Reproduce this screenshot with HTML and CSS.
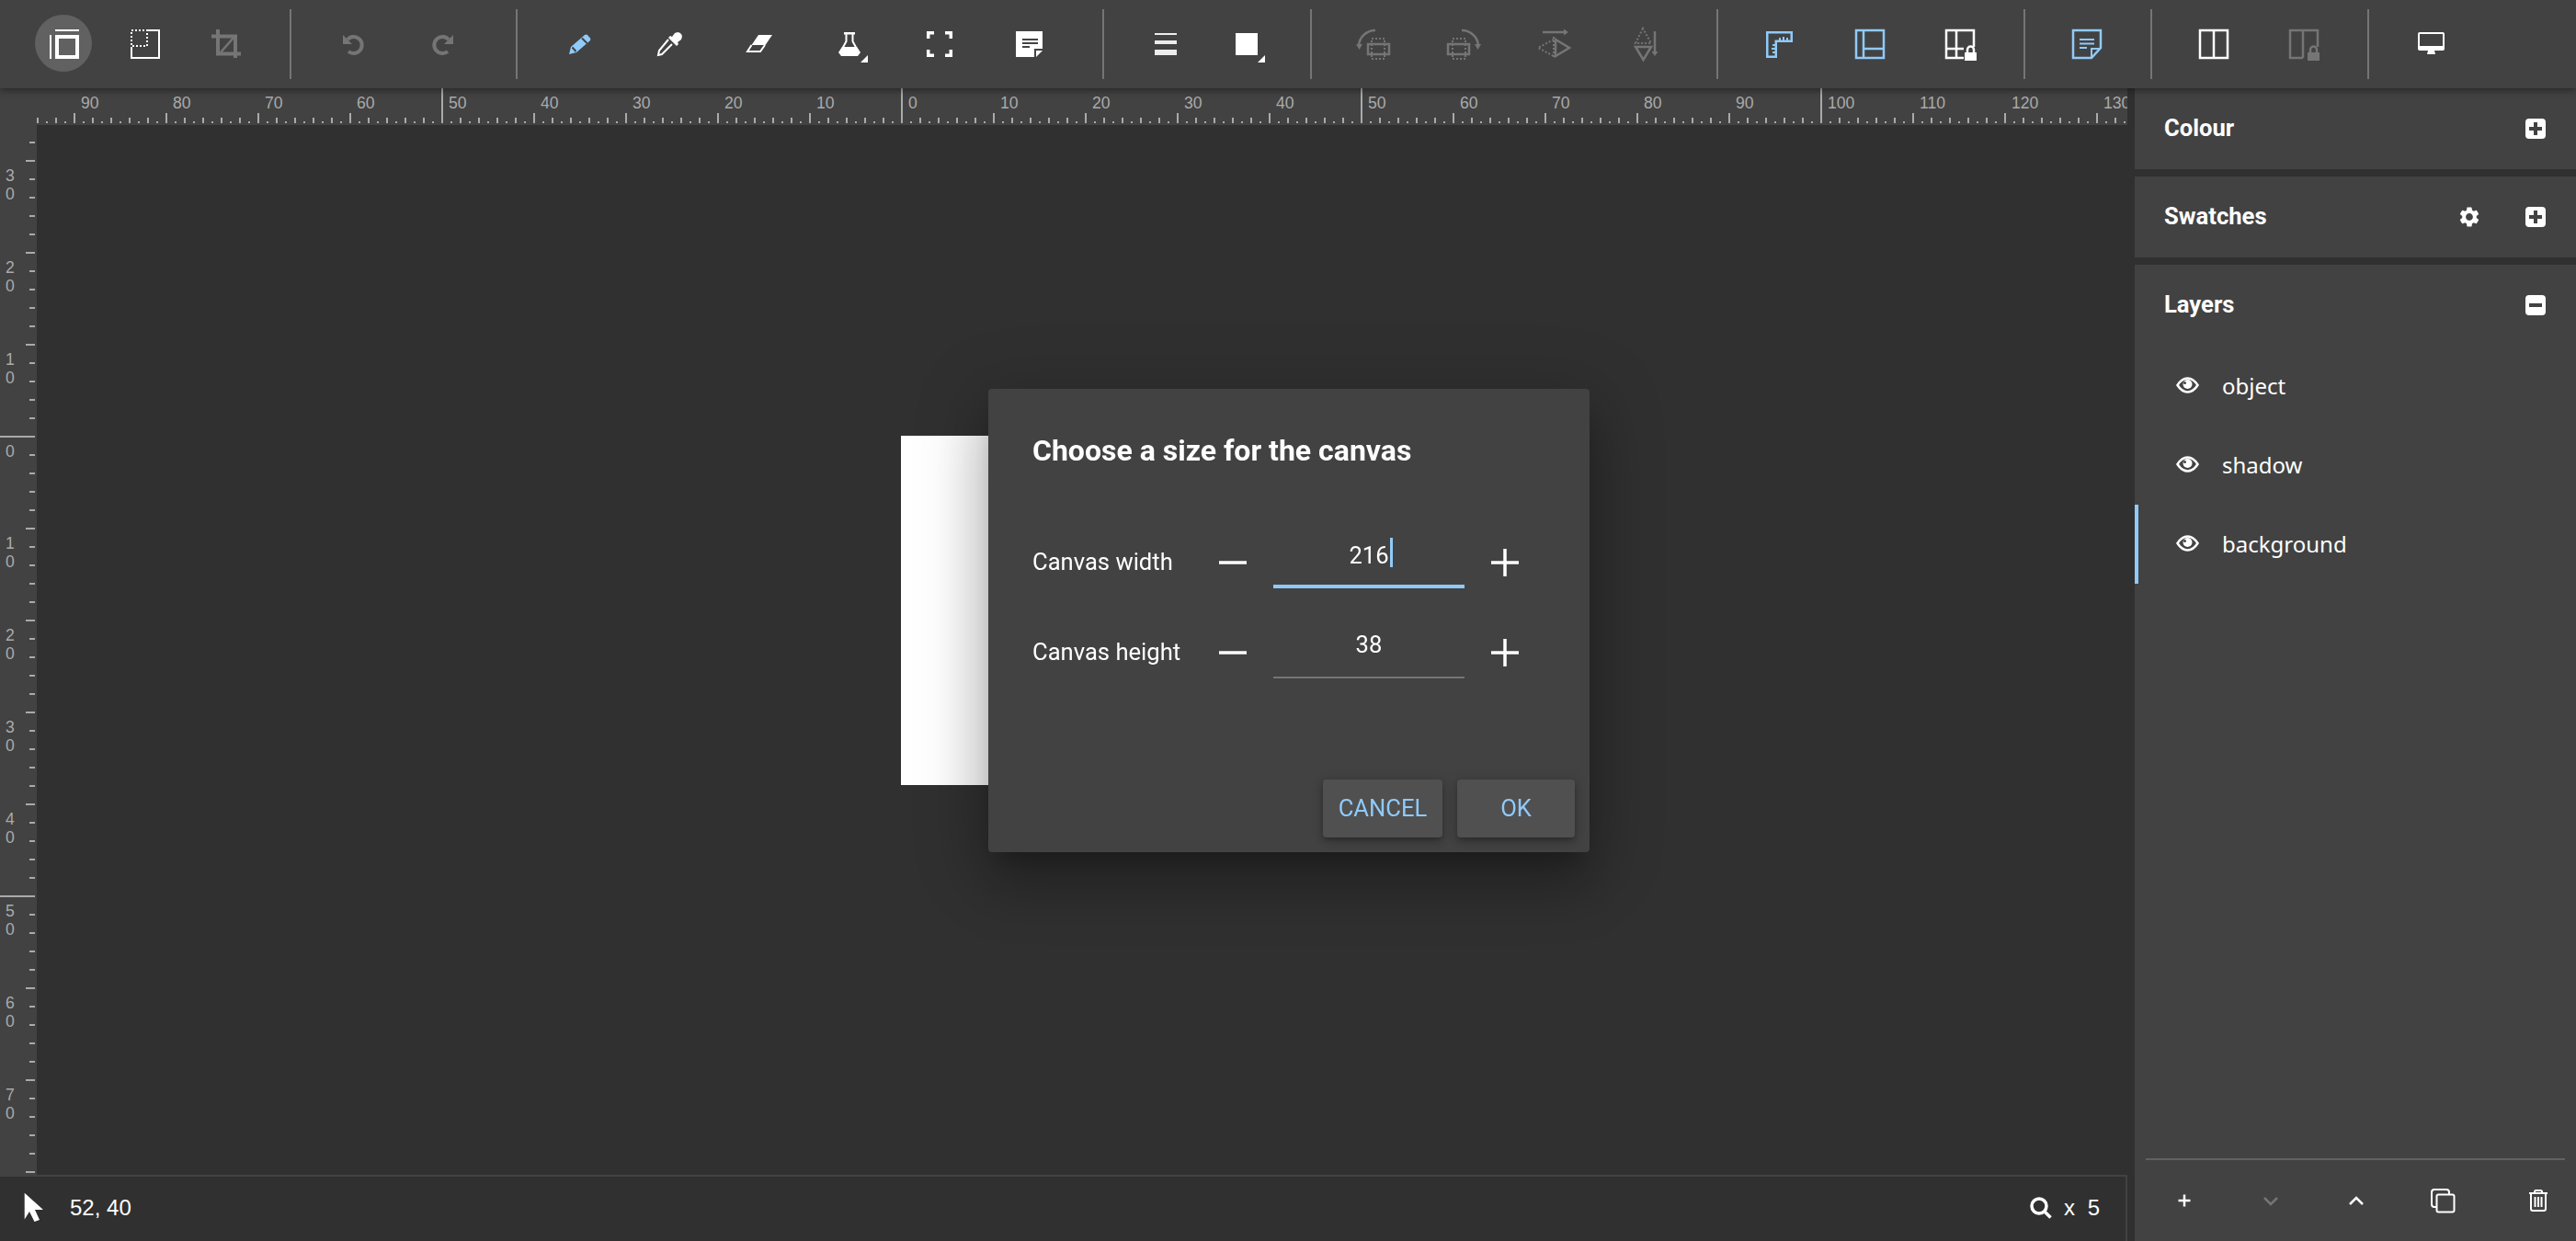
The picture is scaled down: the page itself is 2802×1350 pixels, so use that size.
FILE: index.html
```html
<!DOCTYPE html>
<html lang="en">
<head>
  <meta charset="UTF-8">
  <title>Pixel editor</title>
  <link rel="stylesheet" href="styles.css">
</head>
<body>
  <div class="app">
    <header class="toolbar">
      <div class="tool-group group-first">
        <button class="tool tool-sm tool-active"><svg viewBox="0 0 40 40"><path class="ln-white ln-fine" d="M6 10V36M11 5H37"/><rect class="ln-white ln-thick" x="13" y="12" width="22" height="22"/></svg></button>
        <button class="tool tool-sm"><svg viewBox="0 0 40 40"><path class="ln-white ln-fine" d="M24 5H36V35H6V23"/><rect class="ln-white dotted" x="6" y="5" width="17" height="17"/></svg></button>
        <button class="tool tool-sm"><svg viewBox="0 0 40 40"><path class="ln-grey ln-thick" d="M12 4V30.500H37M5 11.500H31V35"/><path class="ln-grey" d="M15 29L29 13"/></svg></button>
      </div>
      <span class="tool-sep"></span>
      <div class="tool-group group-wide">
        <button class="tool"><svg viewBox="0 0 40 40"><path class="ln-grey ln-thick" d="M14 15A9 9 0 1 1 15 28"/><path class="fill-grey" d="M9 10V20H19z"/></svg></button>
        <button class="tool"><svg viewBox="0 0 40 40"><g transform="matrix(-1 0 0 1 40 0)"><path class="ln-grey ln-thick" d="M14 15A9 9 0 1 1 15 28"/><path class="fill-grey" d="M9 10V20H19z"/></g></svg></button>
      </div>
      <span class="tool-sep"></span>
      <div class="tool-group group-wide">
        <button class="tool"><svg viewBox="0 0 40 40"><path class="fill-blue" d="M9 31L11 23L26 10Q27.500 9 29 10L32 13.500Q33 15 31.500 16.500L17 29z"/><path class="ln-bg" d="M12.500 23.500L16.500 28M23 13.500L28.500 19"/></svg></button>
        <button class="tool"><svg viewBox="0 0 40 40"><path class="fill-white" d="M29 7A5 5 0 0 1 33 15L29 18L30 20L28 22L19 13L21 11L23 12L26 8z"/><path class="ln-white ln-fine" d="M19 15L9 27L8 32L12 31L23 20"/></svg></button>
        <button class="tool"><svg viewBox="0 0 40 40"><path class="fill-white" d="M19 10H34L26.500 21H11.500z"/><path class="ln-white ln-fine" d="M11.500 21L7 28H21L26 21"/></svg></button>
        <button class="tool"><svg viewBox="0 0 40 40"><path class="fill-white" d="M14 7H26V9.500H14zM12 23H28L32 29L29 33H11L8 29z"/><path class="ln-white ln-fine" d="M16.500 9V17L11 27M23.500 9V17L29 27"/><path class="fill-white" d="M32 40L40 32V40z"/></svg></button>
        <button class="tool"><svg viewBox="0 0 40 40"><path class="ln-white ln-mid" d="M7.700 14V7.700H14M26 7.700H32.300V14M32.300 26V32.300H26M14 32.300H7.700V26"/></svg></button>
        <button class="tool"><svg viewBox="0 0 40 40"><path class="fill-white" d="M5 6H34V25H25V34H5z"/><path class="fill-white" d="M27 34V27H34z"/><path class="ln-bg" d="M12 15H29M12 19H29M12 23H20"/></svg></button>
      </div>
      <span class="tool-sep"></span>
      <div class="tool-group group-stroke">
        <button class="tool tool-sm"><svg viewBox="0 0 40 40"><path class="fill-soft" d="M8 8H32V10H8zM8 16H32V20H8zM8 26H32V32H8z"/></svg></button>
        <button class="tool tool-sm"><svg viewBox="0 0 40 40"><path class="fill-white" d="M8 8H32V32H8zM32 40L40 32V40z"/></svg></button>
      </div>
      <span class="tool-sep"></span>
      <div class="tool-group group-wide">
        <button class="tool"><svg viewBox="0 0 40 40"><rect class="ln-grey" x="14" y="20" width="23" height="11"/><rect class="ln-grey dotted" x="18" y="14" width="14" height="22"/><path class="ln-grey" d="M22 5A18 18 0 0 0 4 21"/><path class="fill-grey" d="M1 20H8L4.500 26z"/></svg></button>
        <button class="tool"><svg viewBox="0 0 40 40"><g transform="matrix(-1 0 0 1 40 0)"><rect class="ln-grey" x="14" y="20" width="23" height="11"/><rect class="ln-grey dotted" x="18" y="14" width="14" height="22"/><path class="ln-grey" d="M22 5A18 18 0 0 0 4 21"/><path class="fill-grey" d="M1 20H8L4.500 26z"/></g></svg></button>
        <button class="tool"><svg viewBox="0 0 40 40"><path class="ln-grey" d="M8 7H32M22 15V33L37 24z"/><path class="fill-grey" d="M31 3.500L36 7L31 10.500z"/><path class="ln-grey dotted" d="M20 12V35M20 15L3 24L20 33"/></svg></button>
        <button class="tool"><svg viewBox="0 0 40 40"><path class="ln-grey" d="M32 6V30M11 23H28L19.500 37z"/><path class="fill-grey" d="M28.500 28H35.500L32 33z"/><path class="ln-grey dotted" d="M19 3L11 19H28z"/></svg></button>
      </div>
      <span class="tool-sep"></span>
      <div class="tool-group group-slim">
        <button class="tool"><svg viewBox="0 0 40 40"><path class="ln-blue" d="M6.250 7.250H32.750V16.750H15.750V33.750H6.250z"/><path class="ln-blue ln-fine" d="M20 17V13M24 17V12M28 17V13M16 21H12M16 25H11M16 29H12"/></svg></button>
        <button class="tool"><svg viewBox="0 0 40 40"><rect class="ln-blue" x="5" y="5" width="30" height="30"/><path class="ln-blue" d="M13 5V35M13 25H35"/></svg></button>
        <button class="tool"><svg viewBox="0 0 40 40"><path class="ln-white" d="M35 23V5H5V35H24M16 5V35M5 25H24"/><path class="fill-white" d="M25 29H38V38H25z"/><path class="ln-white" d="M28 29V26A3.500 3.500 0 0 1 35 26V29"/></svg></button>
      </div>
      <span class="tool-sep"></span>
      <div class="tool-group group-slim">
        <button class="tool"><svg viewBox="0 0 40 40"><path class="ln-blue" d="M5 5H35V24L25 35H5z"/><path class="ln-blue ln-fine" d="M25 35V25H35M12 15H28M12 19.500H28M12 24H20"/></svg></button>
      </div>
      <span class="tool-sep"></span>
      <div class="tool-group group-slim">
        <button class="tool"><svg viewBox="0 0 40 40"><rect class="ln-white" x="5" y="5" width="30" height="30"/><path class="ln-white" d="M20 5V35"/></svg></button>
        <button class="tool"><svg viewBox="0 0 40 40"><path class="ln-grey" d="M35 23V5H5V35H19M19 5V35"/><path class="fill-grey" d="M24 29H37V38H24z"/><path class="ln-grey" d="M27 29V26A3.500 3.500 0 0 1 34 26V29"/></svg></button>
      </div>
      <span class="tool-sep"></span>
      <div class="tool-group">
        <button class="tool"><svg viewBox="0 0 40 40"><path class="fill-white" fill-rule="evenodd" d="M8 7H33Q35 7 35 9V25Q35 27 33 27H24L25 31H16L17 27H8Q6 27 6 25V9Q6 7 8 7zM8 9V22H33V9z"/></svg></button>
      </div>
    </header>

    <div class="workspace">
      <main class="editor">
        <div class="ruler-top">
          <div class="ruler-top-track">
            <span class="h-label">90</span><span class="h-label">80</span><span class="h-label">70</span><span class="h-label">60</span><span class="h-label">50</span><span class="h-label">40</span><span class="h-label">30</span><span class="h-label">20</span><span class="h-label">10</span><span class="h-label">0</span><span class="h-label">10</span><span class="h-label">20</span><span class="h-label">30</span><span class="h-label">40</span><span class="h-label">50</span><span class="h-label">60</span><span class="h-label">70</span><span class="h-label">80</span><span class="h-label">90</span><span class="h-label">100</span><span class="h-label">110</span><span class="h-label">120</span><span class="h-label">130</span>
          </div>
        </div>
        <div class="stage">
          <div class="ruler-left">
            <div class="v-label">30</div><div class="v-label">20</div><div class="v-label">10</div><div class="v-label">0</div><div class="v-label">10</div><div class="v-label">20</div><div class="v-label">30</div><div class="v-label">40</div><div class="v-label">50</div><div class="v-label">60</div><div class="v-label">70</div>
          </div>
          <div class="canvas-area">
            <div class="paper"></div>
          </div>
        </div>
        <footer class="status">
          <div class="status-item">
            <svg class="cursor-icon" viewBox="0 0 22 33"><path class="fill-white" d="M.7.7V29.500L6 21L11.500 32L17 30L12 19H21z"/></svg>
            <span>52, 40</span>
          </div>
          <div class="status-item zoom-item">
            <svg class="search-icon" viewBox="0 0 24 24"><circle class="ln-white ln-mid" cx="10" cy="10" r="8"/><path class="ln-white ln-mid" d="M15.500 15.500L22.500 22.500"/></svg>
            <span>x 5</span>
          </div>
        </footer>
      </main>

      <aside class="panel">
        <section class="panel-section">
          <div class="panel-head">
            <h2>Colour</h2>
            <svg class="box-icon" viewBox="0 0 22 22"><rect class="fill-white" width="22" height="22" rx="4"/><path class="ln-bg ln-box" d="M11 4V18M4 11H18"/></svg>
          </div>
        </section>
        <section class="panel-section">
          <div class="panel-head">
            <h2>Swatches</h2>
            <svg class="gear-icon" viewBox="0 0 24 24"><path class="fill-white" d="M19.140 12.940c.04-.3.06-.61.06-.94 0-.32-.02-.64-.07-.94l2.030-1.580a.49.49 0 0 0 .12-.61l-1.920-3.320a.488.488 0 0 0-.59-.22l-2.390.96c-.5-.38-1.030-.7-1.620-.94l-.36-2.540a.484.484 0 0 0-.48-.41h-3.840c-.24 0-.43.17-.47.41l-.36 2.540c-.59.24-1.130.57-1.620.94l-2.390-.96c-.22-.08-.47 0-.59.22L2.740 8.870c-.12.21-.08.47.12.61l2.030 1.580c-.05.3-.09.63-.09.94s.02.64.07.94l-2.030 1.580a.49.49 0 0 0-.12.61l1.920 3.320c.12.22.37.29.59.22l2.390-.96c.5.38 1.030.7 1.620.94l.36 2.540c.05.24.24.41.48.41h3.840c.24 0 .44-.17.47-.41l.36-2.540c.59-.24 1.130-.56 1.620-.94l2.390.96c.22.08.47 0 .59-.22l1.920-3.320c.12-.22.07-.47-.12-.61l-2.010-1.580zM12 15.600c-1.980 0-3.600-1.620-3.600-3.600s1.620-3.600 3.600-3.600 3.600 1.620 3.600 3.600-1.620 3.600-3.600 3.600z"/></svg>
            <svg class="box-icon" viewBox="0 0 22 22"><rect class="fill-white" width="22" height="22" rx="4"/><path class="ln-bg ln-box" d="M11 4V18M4 11H18"/></svg>
          </div>
        </section>
        <section class="panel-section layers">
          <div class="panel-head">
            <h2>Layers</h2>
            <svg class="box-icon" viewBox="0 0 22 22"><rect class="fill-white" width="22" height="22" rx="4"/><path class="ln-bg ln-box" d="M4 11H18"/></svg>
          </div>
          <ul class="layer-list">
            <li class="layer"><svg class="eye-icon" viewBox="0 0 25 18"><path class="ln-white" d="M1.500 9C5 3.500 9 1.500 12.500 1.500S20 3.500 23.500 9C20 14.500 16 16.500 12.500 16.500S5 14.500 1.500 9z"/><circle class="fill-white" cx="12.500" cy="8" r="5"/><circle class="fill-bg" cx="9.500" cy="6.500" r="1.500"/></svg>object</li>
            <li class="layer"><svg class="eye-icon" viewBox="0 0 25 18"><path class="ln-white" d="M1.500 9C5 3.500 9 1.500 12.500 1.500S20 3.500 23.500 9C20 14.500 16 16.500 12.500 16.500S5 14.500 1.500 9z"/><circle class="fill-white" cx="12.500" cy="8" r="5"/><circle class="fill-bg" cx="9.500" cy="6.500" r="1.500"/></svg>shadow</li>
            <li class="layer layer-selected"><svg class="eye-icon" viewBox="0 0 25 18"><path class="ln-white" d="M1.500 9C5 3.500 9 1.500 12.500 1.500S20 3.500 23.500 9C20 14.500 16 16.500 12.500 16.500S5 14.500 1.500 9z"/><circle class="fill-white" cx="12.500" cy="8" r="5"/><circle class="fill-bg" cx="9.500" cy="6.500" r="1.500"/></svg>background</li>
          </ul>
          <div class="layer-actions">
            <svg viewBox="0 0 30 30"><path class="ln-white" d="M15 8.500V21.500M8.500 15H21.500"/></svg>
            <svg viewBox="0 0 30 30"><path class="ln-grey" d="M8 12L15 19L22 12"/></svg>
            <svg viewBox="0 0 30 30"><path class="ln-white" d="M8 19L15 12L22 19"/></svg>
            <svg viewBox="0 0 30 30"><rect class="ln-white ln-fine" x="3" y="3" width="19" height="19" rx="3"/><rect class="ln-white ln-fine fill-bg" x="8.500" y="8.500" width="19" height="19" rx="2"/></svg>
            <svg class="trash" viewBox="0 0 30 30"><path class="ln-white ln-fine" d="M5 7H25M11 7V5.500Q11 4 12.500 4H17.500Q19 4 19 5.500V7M7 7V24Q7 26 9 26H21Q23 26 23 24V7M11.500 11V22M15 11V22M18.500 11V22"/></svg>
          </div>
        </section>
      </aside>
    </div>
  </div>

  <div class="overlay">
    <div class="dialog">
      <h1 class="dialog-title">Choose a size for the canvas</h1>
      <div class="size-rows">
        <div class="size-row">
          <span class="size-label">Canvas width</span>
          <svg class="step-icon" viewBox="0 0 30 30"><path class="ln-white ln-step" d="M0 15H30"/></svg>
          <div class="size-field size-field-focus"><span class="size-value size-value-caret">216</span></div>
          <svg class="step-icon" viewBox="0 0 30 30"><path class="ln-white ln-step" d="M0 15H30M15 0V30"/></svg>
        </div>
        <div class="size-row">
          <span class="size-label">Canvas height</span>
          <svg class="step-icon" viewBox="0 0 30 30"><path class="ln-white ln-step" d="M0 15H30"/></svg>
          <div class="size-field"><span class="size-value">38</span></div>
          <svg class="step-icon" viewBox="0 0 30 30"><path class="ln-white ln-step" d="M0 15H30M15 0V30"/></svg>
        </div>
      </div>
      <div class="dialog-actions">
        <button class="dialog-btn btn-cancel">CANCEL</button>
        <button class="dialog-btn btn-ok">OK</button>
      </div>
    </div>
  </div>
</body>
</html>
```

FILE: styles.css
```css
* { box-sizing: border-box; }
html, body { margin: 0; height: 100%; overflow: hidden; }
body { background: #303030; color: #fff; font-family: Roboto, sans-serif; }
h1, h2, ul { margin: 0; padding: 0; }
button { font-family: inherit; border: none; background: none; padding: 0; color: inherit; }

/* svg paint helpers */
svg { display: block; }
svg path, svg rect, svg circle { fill: none; }
.ln-white, .ln-grey, .ln-blue, .ln-bg { stroke-width: 2.5; }
.ln-white { stroke: #fff; }
.ln-grey { stroke: #757575; }
.ln-blue { stroke: #90caf9; }
.ln-bg { stroke: #424242; stroke-width: 2; }
.ln-thick { stroke-width: 4; }
.ln-mid { stroke-width: 3.5; }
.ln-fine { stroke-width: 2; }
.ln-box { stroke-width: 4; }
.ln-step { stroke-width: 3.5; }
.dotted { stroke-width: 2; stroke-dasharray: 2 2; }
svg .fill-white { fill: #fff; }
svg .fill-soft { fill: #ececec; }
svg .fill-grey { fill: #757575; }
svg .fill-blue { fill: #90caf9; }
svg .fill-bg { fill: #424242; }

.app { display: flex; flex-direction: column; height: 100%; }

/* toolbar */
.toolbar {
  position: relative;
  z-index: 2;
  display: flex;
  align-items: center;
  flex: none;
  height: 96px;
  padding-left: 25px;
  background: #424242;
  box-shadow: 0 2px 8px rgba(0, 0, 0, .45);
}
.tool-group { display: flex; }
.group-first { padding-right: 8px; }
.group-wide { padding-right: 12px; }
.group-slim { padding-right: 2px; }
.group-stroke { padding: 0 7px 0 5px; }
.tool {
  display: flex;
  align-items: center;
  justify-content: center;
  width: 98px;
  height: 96px;
}
.tool svg { width: 40px; height: 40px; flex: none; overflow: visible; }
.tool-sm { width: 88px; }
.tool-active svg {
  box-sizing: content-box;
  margin-top: -2px;
  padding: 12px 11px 10px;
  border-radius: 50%;
  background: #616161;
}
.tool-sep { flex: none; width: 2px; height: 76px; margin: 0 18px; background: #757575; }

/* main area */
.workspace { display: flex; flex: 1; min-height: 0; }
.editor { display: flex; flex-direction: column; flex: none; width: 2314px; margin-right: 8px; }

/* rulers: ticks are background stripes, labels are flow text */
.ruler-top { flex: none; height: 40px; padding-left: 40px; background: #424242; }
.ruler-top-track {
  display: flex;
  height: 38px;
  padding-left: 40px;
  overflow: hidden;
  background:
    linear-gradient(to right, #aaa 2px, transparent 2px) 440px 0 / 500px 100% repeat-x,
    linear-gradient(to right, #aaa 2px, transparent 2px) 40px 100% / 100px 11px repeat-x,
    linear-gradient(to right, #aaa 2px, transparent 2px) 0 100% / 20px 6px repeat-x,
    linear-gradient(to right, #aaa 2px, transparent 2px) 10px 100% / 20px 2px repeat-x;
}
.h-label {
  flex: none;
  width: 100px;
  padding-left: 8px;
  font: 17.6px/33px "Liberation Sans", sans-serif;
  color: #aaa;
}
.stage { display: flex; flex: 1; min-height: 0; }
.ruler-left {
  flex: none;
  width: 40px;
  padding-top: 38px;
  overflow: hidden;
  background:
    linear-gradient(#aaa 2px, transparent 2px) 0 338px / 38px 500px repeat-y,
    linear-gradient(#aaa 2px, transparent 2px) 28px 38px / 10px 100px repeat-y,
    linear-gradient(#aaa 2px, transparent 2px) 32px 18px / 6px 20px repeat-y,
    #424242;
}
.v-label {
  width: 24px;
  height: 100px;
  padding: 7px 0 0 6px;
  font: 17.6px/20px "Liberation Sans", sans-serif;
  color: #aaa;
  word-break: break-all;
}
.canvas-area { position: relative; flex: 1; overflow: hidden; background: #303030; }
.paper { position: absolute; left: 940px; top: 338px; width: 520px; height: 380px; background: #fff; }

/* status bar */
.status {
  display: flex;
  align-items: center;
  justify-content: space-between;
  flex: none;
  height: 72px;
  padding: 0 28px 3px 26px;
  border-top: 2px solid #424242;
  border-right: 2px solid #424242;
  background: #303030;
  font: 24px "Liberation Sans", sans-serif;
}
.status-item { display: flex; align-items: center; }
.cursor-icon { width: 22px; height: 33px; margin-right: 28px; }
.search-icon { width: 24px; height: 24px; margin-right: 13px; }
.zoom-item span { word-spacing: 7px; }

/* right panel */
.panel { display: flex; flex-direction: column; gap: 8px; flex: 1; min-width: 0; }
.panel-section { background: #424242; }
.panel-head { display: flex; align-items: center; height: 88px; padding: 0 33px 0 32px; }
.panel-head h2 { flex: 1; margin-bottom: 2px; font-size: 25.6px; font-weight: 700; }
.box-icon { width: 22px; height: 22px; }
.gear-icon { width: 26px; height: 26px; margin-right: 48px; }
.layers { display: flex; flex-direction: column; flex: 1; min-height: 0; }
.layer-list { flex: 1; padding-top: 1px; list-style: none; }
.layer {
  display: flex;
  align-items: center;
  gap: 25px;
  height: 86px;
  padding: 0 0 2px 45px;
  font: 24px "Noto Sans", sans-serif;
}
.eye-icon { width: 25px; height: 18px; }
.layer-selected { box-shadow: inset 4px 0 0 #90caf9; }
.layer-actions {
  display: flex;
  align-items: center;
  gap: 63.500px;
  height: 90px;
  margin: 0 12px;
  padding-left: 27px;
  border-top: 2px solid #616161;
}
.layer-actions svg { width: 30px; height: 30px; flex: none; }
.layer-actions .trash { margin-left: 11px; }

/* dialog */
.overlay { position: fixed; inset: 0; z-index: 5; display: flex; align-items: center; justify-content: center; padding: 0 0 0 2px; }
.dialog {
  display: flex;
  flex-direction: column;
  width: 654px;
  height: 504px;
  padding: 47px 16px 16px 48px;
  border-radius: 4px;
  background: #424242;
  box-shadow: 0 18px 24px -11px rgba(0, 0, 0, .25), 0 38px 61px 5px rgba(0, 0, 0, .18), 0 14px 74px 13px rgba(0, 0, 0, .16);
}
.dialog-title { font-size: 32px; font-weight: 700; line-height: 40px; }
.size-rows { display: flex; flex-direction: column; gap: 42px; margin-top: 74px; }
.size-row { display: flex; align-items: center; gap: 29px; height: 56px; font-size: 25.6px; }
.size-label { width: 174px; margin-bottom: 2px; white-space: nowrap; }
.step-icon { width: 30px; height: 30px; flex: none; }
.size-field {
  flex: none;
  width: 208px;
  height: 56px;
  border-bottom: 2px solid #757575;
  text-align: center;
  line-height: 38px;
}
.size-field-focus { border-bottom: 4px solid #90caf9; line-height: 40px; }
.size-value { position: relative; }
.size-value-caret::after {
  content: "";
  position: absolute;
  left: calc(100% + 1px);
  top: -4px;
  width: 3px;
  height: 32px;
  background: #90caf9;
}
.dialog-actions { display: flex; justify-content: flex-end; gap: 16px; margin-top: auto; }
.dialog-btn {
  height: 63px;
  padding-bottom: 2px;
  border-radius: 4px;
  background: #505050;
  color: #90caf9;
  font-size: 25.6px;
  box-shadow: 0 3px 5px -1px rgba(0, 0, 0, .2), 0 5px 10px rgba(0, 0, 0, .14), 0 1px 14px rgba(0, 0, 0, .12);
}
.btn-cancel { width: 130px; }
.btn-ok { width: 128px; }
```
